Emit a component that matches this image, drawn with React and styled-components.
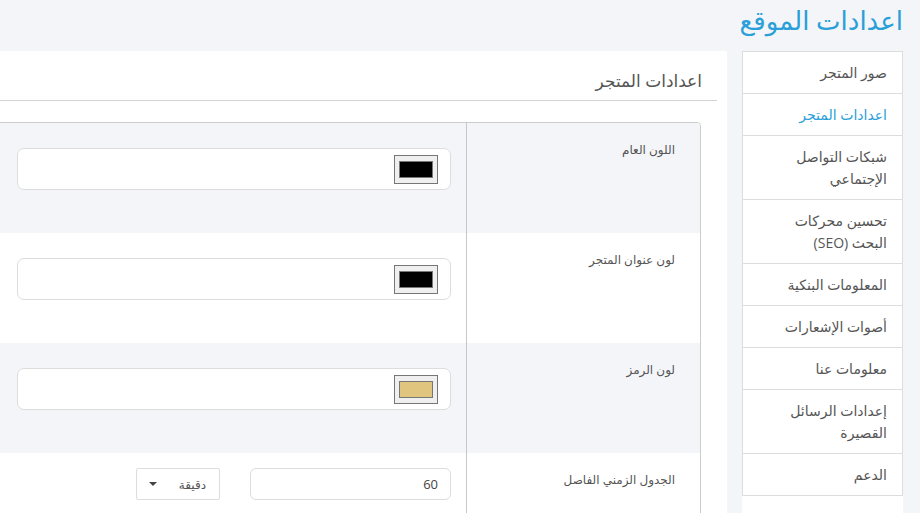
import styled, { createGlobalStyle } from "styled-components";

const Global = createGlobalStyle`
  html, body { margin: 0; padding: 0; background: #f4f5f9; }
  body { font-family: "Open Sans", "DejaVu Sans", sans-serif; }
`;

const blue = "#2a9fd8";

const Page = styled.div`
  direction: rtl;
  width: 100%;
  height: 513px;
  overflow: hidden;
  background: #f4f5f9;
`;

const Title = styled.h1`
  margin: 0;
  padding: 3px 17px 0 0;
  height: 51px;
  box-sizing: border-box;
  font-weight: 400;
  font-size: 26px;
  line-height: 34px;
  color: ${blue};
`;

const Body = styled.div`
  display: flex;
  align-items: flex-start;
  gap: 15px;
  padding-right: 17px;
`;

const Sidebar = styled.nav`
  flex: 0 0 161px;
  background: #fff;
  padding-bottom: 60px;
`;

const NavItem = styled.div`
  border: 1px solid #ddd;
  border-bottom: none;
  padding: 9.5px 15px 9.5px 27px;
  font-size: 14px;
  line-height: 22px;
  color: ${(p) => (p.$active ? blue : "#555")};
  &:last-child { border-bottom: 1px solid #ddd; }
`;

const Main = styled.section`
  flex: 0 0 1000px;
  background: #fff;
  min-height: 470px;
`;

const PanelHead = styled.h2`
  margin: 0 10px 0 0;
  padding: 18px 15px 7px 0;
  border-bottom: 1px solid #d3d3d3;
  font-weight: 400;
  font-size: 17px;
  line-height: 24px;
  color: #555;
`;

const Table = styled.div`
  margin: 21px 26px 0 0;
  border: 1px solid #ccc;
  border-radius: 4px 4px 0 0;
  overflow: hidden;
`;

const Row = styled.div`
  display: flex;
  height: ${(p) => p.$h || 110}px;
  background: ${(p) => (p.$shade ? "#f4f5f9" : "#fff")};
`;

const Label = styled.div`
  flex: 0 0 208px;
  padding: 18px 25px 0 0;
  border-left: 1px solid #c8c8c8;
  font-size: 12px;
  line-height: 18px;
  color: #555;
`;

const Value = styled.div`
  flex: 1;
  display: flex;
  align-items: flex-start;
  gap: 30px;
  padding: ${(p) => p.$top || 25}px 15px 0 0;
`;

const ColorField = styled.div`
  width: 434px;
  height: 42px;
  box-sizing: border-box;
  border: 1px solid #ddd;
  border-radius: 7px;
  background: #fff;
  display: flex;
  align-items: center;
  padding-right: 12px;
`;

const Swatch = styled.div`
  width: 44px;
  height: 29px;
  box-sizing: border-box;
  border: 1px solid #767676;
  background: #efefef;
  padding: 5px 4px;
  &::after {
    content: "";
    display: block;
    height: 100%;
    box-sizing: border-box;
    border: 1px solid #777;
    background: ${(p) => p.$color};
  }
`;

const NumberBox = styled.div`
  width: 201px;
  height: 32px;
  box-sizing: border-box;
  border: 1px solid #ddd;
  border-radius: 6px;
  padding-right: 12px;
  font-size: 13px;
  line-height: 30px;
  color: #444;
`;

const SelectBox = styled.div`
  width: 84px;
  height: 32px;
  box-sizing: border-box;
  border: 1px solid #ddd;
  border-radius: 2px;
  display: flex;
  align-items: center;
  justify-content: space-between;
  padding: 0 13px 0 12px;
  font-size: 12px;
  color: #555;
`;

const Caret = styled.span`
  width: 0;
  height: 0;
  border-left: 4px solid transparent;
  border-right: 4px solid transparent;
  border-top: 4px solid #444;
`;

const nav = [
  "صور المتجر",
  "اعدادات المتجر",
  "شبكات التواصل الإجتماعي",
  "تحسين محركات البحث (SEO)",
  "المعلومات البنكية",
  "أصوات الإشعارات",
  "معلومات عنا",
  "إعدادات الرسائل القصيرة",
  "الدعم",
];

const colors = [
  { label: "اللون العام", color: "#000000", shade: true },
  { label: "لون عنوان المتجر", color: "#000000" },
  { label: "لون الرمز", color: "#dfc57e", shade: true },
];

export default function App() {
  return (
    <Page>
      <Global />
      <Title>اعدادات الموقع</Title>
      <Body>
        <Sidebar>
          {nav.map((n, i) => (
            <NavItem key={n} $active={i === 1}>
              {n}
            </NavItem>
          ))}
        </Sidebar>
        <Main>
          <PanelHead>اعدادات المتجر</PanelHead>
          <Table>
            {colors.map((c) => (
              <Row key={c.label} $shade={c.shade}>
                <Label>{c.label}</Label>
                <Value>
                  <ColorField>
                    <Swatch $color={c.color} />
                  </ColorField>
                </Value>
              </Row>
            ))}
            <Row $h={80}>
              <Label>الجدول الزمني الفاصل</Label>
              <Value $top={15}>
                <NumberBox>60</NumberBox>
                <SelectBox>
                  <span>دقيقة</span>
                  <Caret />
                </SelectBox>
              </Value>
            </Row>
          </Table>
        </Main>
      </Body>
    </Page>
  );
}
